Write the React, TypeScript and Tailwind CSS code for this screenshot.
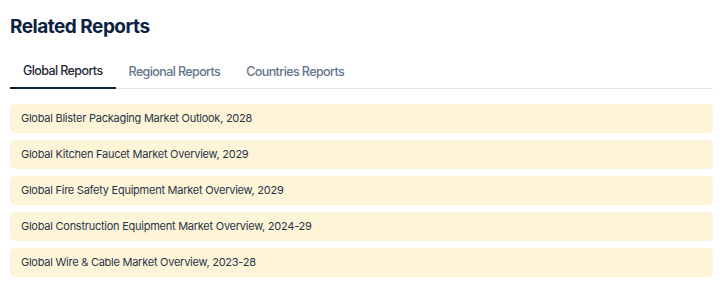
const tabs = ['Global Reports', 'Regional Reports', 'Countries Reports']

const reports = [
  'Global Blister Packaging Market Outlook, 2028',
  'Global Kitchen Faucet Market Overview, 2029',
  'Global Fire Safety Equipment Market Overview, 2029',
  'Global Construction Equipment Market Overview, 2024-29',
  'Global Wire & Cable Market Overview, 2023-28',
]

export default function App() {
  return (
    <div className="h-[288px] w-[727px] bg-white font-['Inter',sans-serif]">
      <div className="w-[713px] pl-[10px] pt-[15px]">
        <h2 className="text-[19px] font-bold leading-[24px] tracking-[-0.5px] text-[#0b2341]">
          Related Reports
        </h2>

        <div className="mt-[24px] flex border-b border-[#e5e7eb]">
          {tabs.map((tab, i) => (
            <button
              key={tab}
              type="button"
              className={
                i === 0
                  ? '-mb-px border-b-2 border-[#0b2341] px-[13px] pb-[8px] text-[12.5px] font-medium leading-[16px] tracking-[-0.6px] text-[#1f2937]'
                  : 'px-[13px] pb-[8px] text-[12.5px] font-medium leading-[16px] tracking-[-0.6px] text-[#64748b]'
              }
            >
              {tab}
            </button>
          ))}
        </div>

        <div className="mt-[15px] flex flex-col gap-[7px]">
          {reports.map((title) => (
            <div
              key={title}
              className="flex h-[29px] items-center rounded-[5px] bg-[#fef4d8] px-[11px] text-[11px] tracking-[-0.25px] text-[#283548]"
            >
              {title}
            </div>
          ))}
        </div>
      </div>
    </div>
  )
}
